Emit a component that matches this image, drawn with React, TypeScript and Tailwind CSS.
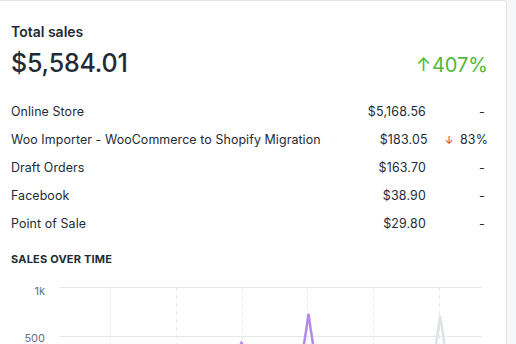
import React from "react";

const rows = [
  { name: "Online Store", amount: "$5,168.56", change: null },
  { name: "Woo Importer - WooCommerce to Shopify Migration", amount: "$183.05", change: "83%" },
  { name: "Draft Orders", amount: "$163.70", change: null },
  { name: "Facebook", amount: "$38.90", change: null },
  { name: "Point of Sale", amount: "$29.80", change: null },
];

function Chart() {
  const xs = [110, 176, 242, 307, 373, 439];
  return (
    <div className="relative h-[80px]">
      <svg width="507" height="80" className="absolute left-0 top-0">
        <line x1="59" y1="21.5" x2="482" y2="21.5" stroke="#e6e8eb" strokeWidth="1" />
        <line x1="59" y1="70.5" x2="482" y2="70.5" stroke="#e6e8eb" strokeWidth="1" />
        {xs.map((x) => (
          <line key={x} x1={x + 0.5} y1="21" x2={x + 0.5} y2="80" stroke="#e6e8eb" strokeWidth="1" strokeDasharray="4 4" />
        ))}
        <path d="M303 84 Q306 66 308.5 48 Q311 66 314 84" fill="none" stroke="#b38ae6" strokeWidth="2.5" />
        <path d="M435 84 Q438 66 440 50 Q443 66 445 84" fill="none" stroke="#dfe3e8" strokeWidth="2.5" />
        <path d="M238 84 Q240 78 241.5 76 Q243 78 245 84" fill="none" stroke="#b38ae6" strokeWidth="1.5" />
      </svg>
      <div className="absolute left-0 top-[20px] w-[45px] text-right text-[11px] text-[#637381] leading-none">1k</div>
      <div className="absolute left-0 top-[67px] w-[45px] text-right text-[11px] text-[#637381] leading-none">500</div>
    </div>
  );
}

export default function App() {
  return (
    <div
      className="w-[516px] h-[344px] overflow-hidden bg-[#f4f6f8] flex"
      style={{ fontFamily: "Inter, 'Noto Sans', sans-serif" }}
    >
      <div className="w-[507px] bg-white border-t border-r border-[#e3e5e8] rounded-tr-[4px] flex flex-col text-[#212b36]">
        <div className="px-[11px] pt-[22px]">
          <div className="text-[14px] font-semibold leading-[18px]">Total sales</div>
          <div className="flex items-end justify-between mt-[6px] pr-[7px]">
            <div className="text-[25px] font-medium leading-[32px] tracking-[-0.2px]">$5,584.01</div>
            <div className="text-[20px] text-[#50b83c] leading-[28px] flex items-center">
              <span className="text-[18px] mr-[1px]">↑</span>407%
            </div>
          </div>
        </div>
        <div className="mt-[19px] px-[11px] flex flex-col">
          {rows.map((r) => (
            <div key={r.name} className="flex items-center h-[28px] text-[12.4px] text-[#212b36] whitespace-nowrap">
              <div className="flex-1 tracking-[0.1px]">{r.name}</div>
              <div className="w-[110px] text-right tracking-[0.2px]">{r.amount}</div>
              <div className="w-[69px] text-right pr-[7px] tracking-[0.2px]">
                {r.change ? (
                  <span>
                    <span className="text-[#de3618] text-[11px] mr-[6px]">↓</span>
                    {r.change}
                  </span>
                ) : (
                  <span className="mr-[3px]">-</span>
                )}
              </div>
            </div>
          ))}
        </div>
        <div className="px-[11px] mt-[14px] text-[11px] font-bold tracking-[0.2px] leading-[14px]">SALES OVER TIME</div>
        <Chart />
      </div>
    </div>
  );
}
